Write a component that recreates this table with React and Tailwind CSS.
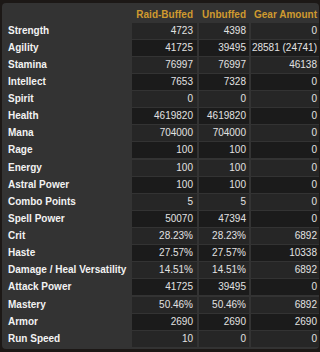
const rows = [
  ['Strength', '4723', '4398', '0'],
  ['Agility', '41725', '39495', '28581 (24741)'],
  ['Stamina', '76997', '76997', '46138'],
  ['Intellect', '7653', '7328', '0'],
  ['Spirit', '0', '0', '0'],
  ['Health', '4619820', '4619820', '0'],
  ['Mana', '704000', '704000', '0'],
  ['Rage', '100', '100', '0'],
  ['Energy', '100', '100', '0'],
  ['Astral Power', '100', '100', '0'],
  ['Combo Points', '5', '5', '0'],
  ['Spell Power', '50070', '47394', '0'],
  ['Crit', '28.23%', '28.23%', '6892'],
  ['Haste', '27.57%', '27.57%', '10338'],
  ['Damage / Heal Versatility', '14.51%', '14.51%', '6892'],
  ['Attack Power', '41725', '39495', '0'],
  ['Mastery', '50.46%', '50.46%', '6892'],
  ['Armor', '2690', '2690', '2690'],
  ['Run Speed', '10', '0', '0'],
];

const cols = 'grid grid-cols-[128px_65px_50px_68px] gap-x-[2px]';

export default function App() {
  return (
    <div className="w-[320px] h-[352px] bg-[#1c1816] pt-[3px] pl-[2px] font-['Liberation_Sans',Arial,sans-serif] text-[10px]">
      <div className="w-[317px] h-[346px] bg-[#333333] rounded-[4px] overflow-hidden">
        <div className={`${cols} h-[19.5px] items-end pb-[1.5px] leading-[12px] font-bold text-[#cf9a2f]`}>
          <div />
          <div className="text-right pr-[4px]">Raid-Buffed</div>
          <div className="text-right pr-[3px]">Unbuffed</div>
          <div className="text-right pr-[2px]">Gear Amount</div>
        </div>
        <div className="flex flex-col gap-y-[2px]">
          {rows.map((r, i) => {
            const bg = i % 2 === 0 ? 'bg-[#262626]' : 'bg-[#1b1b1b]';
            return (
              <div key={r[0]} className={`${cols} h-[15.14px] leading-[16px]`}>
                <div className="pl-[6px] font-bold text-[#f2f2f2] whitespace-nowrap">{r[0]}</div>
                <div className={`${bg} text-right pr-[4px] text-[#e2e2e2]`}>{r[1]}</div>
                <div className={`${bg} text-right pr-[3px] text-[#e2e2e2]`}>{r[2]}</div>
                <div className={`${bg} text-right pr-[2px] text-[#e2e2e2] whitespace-nowrap`}>{r[3]}</div>
              </div>
            );
          })}
        </div>
      </div>
    </div>
  );
}
